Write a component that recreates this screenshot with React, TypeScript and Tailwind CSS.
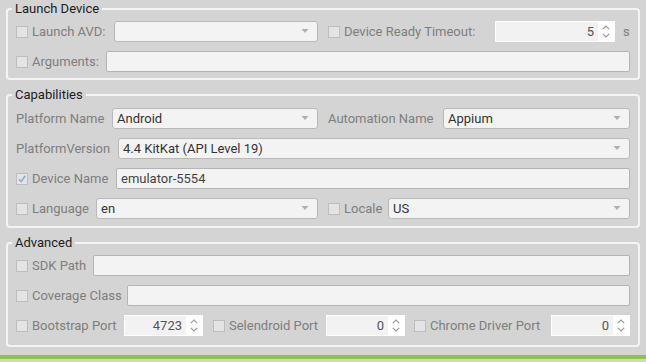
import React from "react";

const font = { fontFamily: 'Roboto, "Noto Sans", sans-serif' };

function Check({ checked = false }: { checked?: boolean }) {
  return (
    <span className="relative flex h-[12px] w-[12px] shrink-0 items-center justify-center border border-[#bdbdbd] bg-[#e4e4e4]">
      {checked && (
        <svg width="10" height="10" viewBox="0 0 10 10" className="absolute">
          <path d="M2 5.2 L4.2 7.6 L8.3 1.8" fill="none" stroke="#8fa9d6" strokeWidth="1.6" />
        </svg>
      )}
    </span>
  );
}

function Label({ text, check, checked, w }: { text: string; check?: boolean; checked?: boolean; w: string }) {
  return (
    <div className={`flex shrink-0 items-center gap-[4px] ${w}`}>
      {check && <Check checked={checked} />}
      <span className="whitespace-nowrap text-[13px] leading-none text-[#7e7e7e]">{text}</span>
    </div>
  );
}

function Combo({ value = "", w = "flex-1" }: { value?: string; w?: string }) {
  return (
    <div className={`flex h-[21px] items-center rounded-[3px] border border-[#b9b9b9] bg-[#f3f3f3] pl-[4px] pr-[8px] ${w}`}>
      <span className="flex-1 whitespace-nowrap text-[13px] leading-none text-[#333]">{value}</span>
      <svg width="8" height="5" viewBox="0 0 8 5">
        <path d="M0.5 0 L7.5 0 L4 4 Z" fill="#b0b0b0" />
      </svg>
    </div>
  );
}

function Input({ value = "", w = "flex-1" }: { value?: string; w?: string }) {
  return (
    <div className={`flex h-[21px] items-center rounded-[2px] border border-[#b4b4b4] bg-[#f3f3f3] px-[4px] ${w}`}>
      <span className="whitespace-nowrap text-[13px] leading-none text-[#444]">{value}</span>
    </div>
  );
}

function Spin({ value, w }: { value: string; w: string }) {
  return (
    <div className={`flex h-[21px] items-stretch border border-white bg-white ${w}`}>
      <div className="flex flex-1 items-center justify-end bg-[#f2f2f2] pr-[4px]">
        <span className="text-[13px] leading-none text-[#555]">{value}</span>
      </div>
      <div className="flex w-[16px] flex-col items-center justify-center gap-[3px]">
        <svg width="8" height="5" viewBox="0 0 8 5">
          <path d="M0.8 4.2 L4 1 L7.2 4.2" fill="none" stroke="#9a9a9a" strokeWidth="1.2" />
        </svg>
        <svg width="8" height="5" viewBox="0 0 8 5">
          <path d="M0.8 0.8 L4 4 L7.2 0.8" fill="none" stroke="#9a9a9a" strokeWidth="1.2" />
        </svg>
      </div>
    </div>
  );
}

function Group({ title, children, className = "" }: { title: string; children: React.ReactNode; className?: string }) {
  return (
    <fieldset className={`mx-[6px] rounded-[4px] border-2 border-[#f4f4f4] px-[8px] ${className}`}>
      <legend className="ml-[-4px] px-[3px] text-[13px] leading-[18px] text-[#1c1c1c]">{title}</legend>
      {children}
    </fieldset>
  );
}

export default function App() {
  return (
    <div className="flex h-[362px] w-[646px] flex-col overflow-hidden bg-[#d4d4d4]" style={font}>
      <Group title="Launch Device" className="pb-[6px] pt-[3px]">
        <div className="flex flex-col gap-[9px]">
          <div className="flex items-center">
            <Label text="Launch AVD:" check w="w-[98px]" />
            <Combo w="w-[204px]" />
            <div className="w-[10px]" />
            <Label text="Device Ready Timeout:" check w="w-[167px]" />
            <Spin value="5" w="w-[120px]" />
            <span className="ml-[8px] text-[13px] leading-none text-[#7e7e7e]">s</span>
          </div>
          <div className="flex items-center">
            <Label text="Arguments:" check w="w-[90px]" />
            <Input />
          </div>
        </div>
      </Group>

      <Group title="Capabilities" className="mt-[6px] pb-[7px] pt-[4px]">
        <div className="flex flex-col gap-[9px]">
          <div className="flex items-center">
            <Label text="Platform Name" w="w-[96px]" />
            <Combo value="Android" w="w-[206px]" />
            <div className="w-[10px]" />
            <Label text="Automation Name" w="w-[115px]" />
            <Combo value="Appium" />
          </div>
          <div className="flex items-center">
            <Label text="PlatformVersion" w="w-[102px]" />
            <Combo value="4.4 KitKat (API Level 19)" />
          </div>
          <div className="flex items-center">
            <Label text="Device Name" check checked w="w-[100px]" />
            <Input value="emulator-5554" />
          </div>
          <div className="flex items-center">
            <Label text="Language" check w="w-[80px]" />
            <Combo value="en" w="w-[222px]" />
            <div className="w-[10px]" />
            <Label text="Locale" check w="w-[60px]" />
            <Combo value="US" />
          </div>
        </div>
      </Group>

      <Group title="Advanced" className="mt-[6px] pb-[9px] pt-[3px]">
        <div className="flex flex-col gap-[9px]">
          <div className="flex items-center">
            <Label text="SDK Path" check w="w-[77px]" />
            <Input />
          </div>
          <div className="flex items-center">
            <Label text="Coverage Class" check w="w-[111px]" />
            <Input />
          </div>
          <div className="flex items-center">
            <Label text="Bootstrap Port" check w="w-[108px]" />
            <Spin value="4723" w="w-[79px]" />
            <div className="w-[10px]" />
            <Label text="Selendroid Port" check w="w-[113px]" />
            <Spin value="0" w="w-[79px]" />
            <div className="w-[9px]" />
            <Label text="Chrome Driver Port" check w="w-[137px]" />
            <Spin value="0" w="w-[79px]" />
          </div>
        </div>
      </Group>

      <div className="mt-[8px] h-[4px] w-full bg-[#8cc63f]" />
    </div>
  );
}
